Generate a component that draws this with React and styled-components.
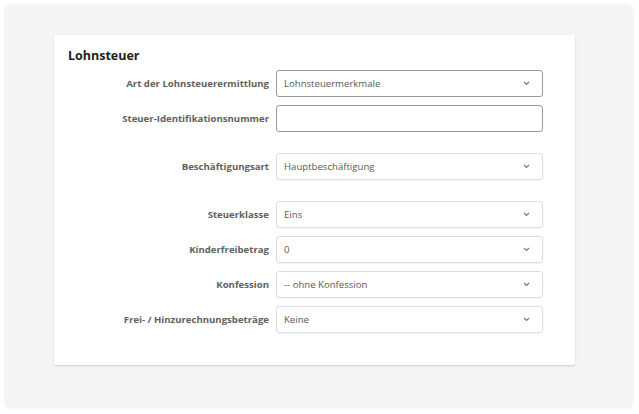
import React from "react";
import styled, { createGlobalStyle } from "styled-components";

const Global = createGlobalStyle`
  body {
    margin: 0;
    background: #ffffff;
    font-family: "Open Sans", "Liberation Sans", sans-serif;
  }
`;

const Panel = styled.div`
  margin: 5px 6px 6px 5px;
  height: 403px;
  box-sizing: border-box;
  padding: 30px 58px 0 49px;
  background: #f4f4f4;
  border-radius: 6px;
  box-shadow: 0 0 4px rgba(0, 0, 0, 0.06);
`;

const Card = styled.div`
  background: #fff;
  border-radius: 2px;
  height: 330px;
  box-sizing: border-box;
  padding: 12px 32px 0 14px;
  box-shadow: 0 1px 2px rgba(0, 0, 0, 0.16);
`;

const Title = styled.h2`
  margin: 0 0 5px 0;
  font-size: 12.5px;
  font-weight: 700;
  color: #222;
  line-height: 18px;
`;

const Form = styled.div`
  display: grid;
  grid-template-columns: 201px 267px;
  column-gap: 7px;
  row-gap: 8px;
`;

const Label = styled.div`
  text-align: right;
  font-size: 9.6px;
  font-weight: 700;
  color: #606060;
  align-self: center;
  white-space: nowrap;
  margin-top: ${(p) => (p.$spaced ? "13px" : "0")};
`;

const Field = styled.div`
  height: 27px;
  box-sizing: border-box;
  border: 1px solid ${(p) => (p.$strong ? "#9a9a9a" : "#dcdcdc")};
  border-radius: 3px;
  display: flex;
  align-items: center;
  justify-content: space-between;
  padding: 0 12px 0 7px;
  font-size: 9.6px;
  color: #585858;
  margin-top: ${(p) => (p.$spaced ? "13px" : "0")};
  box-shadow: ${(p) => (p.$strong ? "none" : "0 1px 1px rgba(0,0,0,0.04)")};
`;

const Chevron = () => (
  <svg width="7" height="5" viewBox="0 0 7 5">
    <path d="M1 1 L3.5 3.5 L6 1" fill="none" stroke="#777" strokeWidth="1.1" />
  </svg>
);

const rows = [
  { label: "Art der Lohnsteuerermittlung", value: "Lohnsteuermerkmale", select: true, strong: true },
  { label: "Steuer-Identifikationsnummer", value: "", strong: true },
  { label: "Beschäftigungsart", value: "Hauptbeschäftigung", select: true, spaced: true },
  { label: "Steuerklasse", value: "Eins", select: true, spaced: true },
  { label: "Kinderfreibetrag", value: "0", select: true },
  { label: "Konfession", value: "-- ohne Konfession", select: true },
  { label: "Frei- / Hinzurechnungsbeträge", value: "Keine", select: true },
];

export default function App() {
  return (
    <>
      <Global />
      <Panel>
        <Card>
          <Title>Lohnsteuer</Title>
          <Form>
            {rows.map((r) => (
              <React.Fragment key={r.label}>
                <Label $spaced={r.spaced}>{r.label}</Label>
                <Field $strong={r.strong} $spaced={r.spaced}>
                  <span>{r.value}</span>
                  {r.select && <Chevron />}
                </Field>
              </React.Fragment>
            ))}
          </Form>
        </Card>
      </Panel>
    </>
  );
}
